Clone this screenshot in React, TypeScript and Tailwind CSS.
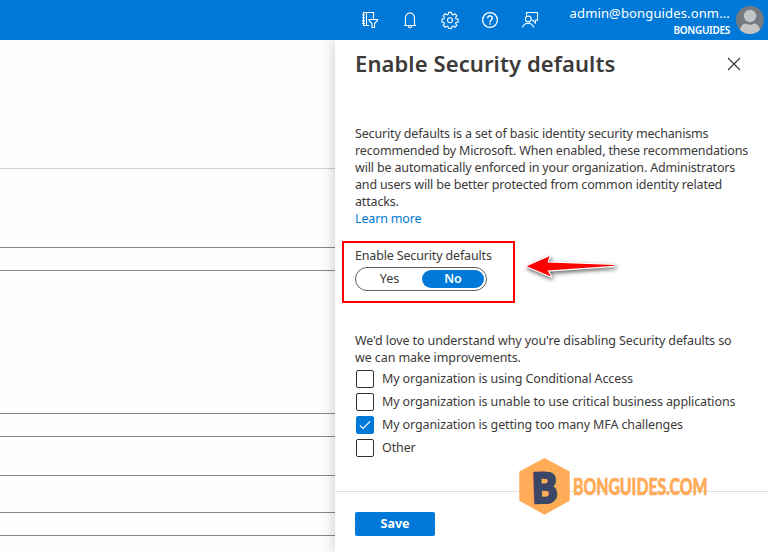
import React from 'react';

const rows = [
  { id: 'tabs', className: 'h-[129px] border-b border-[#d2d0ce]' },
  { id: 'intro', className: 'h-[79px] border-b border-[#8a8886]' },
  { id: 'field-name', className: 'h-[23px] border-b border-[#8a8886]' },
  { id: 'details', className: 'h-[143px] border-b border-[#8a8886]' },
  { id: 'field-contact', className: 'h-[23px] border-b border-[#8a8886]' },
  { id: 'field-global', className: 'h-[39px] border-b border-[#8a8886]' },
  { id: 'field-privacy', className: 'h-[37px] border-b border-[#8a8886]' },
  { id: 'field-url', className: 'h-[23px] border-b border-[#8a8886]' }
];

const description = [
  'Security defaults is a set of basic identity security mechanisms',
  'recommended by Microsoft. When enabled, these recommendations',
  'will be automatically enforced in your organization. Administrators',
  'and users will be better protected from common identity related',
  'attacks.'
];

const reasons = [
  { label: 'My organization is using Conditional Access', checked: false },
  { label: 'My organization is unable to use critical business applications', checked: false },
  { label: 'My organization is getting too many MFA challenges', checked: true },
  { label: 'Other', checked: false }
];

const iconProps = {
  width: 18,
  height: 18,
  viewBox: '0 0 18 18',
  fill: 'none',
  stroke: 'white',
  strokeWidth: 1.1
};

const FilterIcon = () => (
  <svg {...iconProps}>
    <path d="M8 14.5H2.5v-13h10v6M5.5 1.5v13M1 4h3M1 6.8h3M1 9.6h3M1 12.4h3" />
    <path d="M8 8.5h8.5v1l-3 3v4H11v-4l-3-3z" />
  </svg>
);

const BellIcon = () => (
  <svg {...iconProps}>
    <path d="M3 14.5h12M4.5 14.5V6.8a4.5 4.9 0 0 1 9 0v7.7M7.2 14.8a1.8 1.9 0 0 0 3.6 0" />
  </svg>
);

const GearIcon = () => (
  <svg {...iconProps}>
    <path d="M7.5 1.4h3l.4 2.1 1.2.5 1.8-1.2 1.9 1.9-1.2 1.8.5 1.2 2 .4v2.9l-2 .4-.5 1.2 1.2 1.8-1.9 1.9-1.8-1.2-1.2.5-.4 2h-3l-.4-2-1.2-.5-1.8 1.2-1.9-1.9 1.2-1.8-.5-1.2-2-.4V8.1l2-.4.5-1.2-1.2-1.8 1.9-1.9 1.8 1.2 1.2-.5z" />
    <circle cx="9" cy="9.3" r="2.5" />
  </svg>
);

const HelpIcon = () => (
  <svg {...iconProps} strokeWidth="1.3">
    <circle cx="9" cy="9" r="7.4" />
    <path d="M6.7 7.2a2.3 2.3 0 1 1 3.7 1.8C9.4 9.7 9 10 9 11.2" strokeWidth="1.5" />
    <path d="M9 12.2v1.6" strokeWidth="1.6" />
  </svg>
);

const FeedbackIcon = () => (
  <svg {...iconProps}>
    <path d="M5.5 4.5v-3h11v7.8h-2v2.6l-2.6-2.6h-.8" />
    <circle cx="7.3" cy="8" r="2.9" />
    <path d="M1.5 16.5a5.8 5.8 0 0 1 11.2 0" />
  </svg>
);

const TopBar = () => (
  <header className="flex h-10 shrink-0 items-center justify-end bg-[#0078d7] text-white">
    <div className="flex items-center gap-[22px]">
      <FilterIcon />
      <BellIcon />
      <GearIcon />
      <HelpIcon />
      <FeedbackIcon />
    </div>
    <div className="ml-[22px] flex w-[169px] flex-col items-end pt-[3px] whitespace-nowrap">
      <span className="text-[13px] leading-[17px] tracking-[0.14px]">admin@bonguides.onm...</span>
      <span className="text-[10px] leading-[16px] font-semibold tracking-[-0.3px]">BONGUIDES</span>
    </div>
    <svg className="mr-1 ml-[6px]" width="28" height="28" viewBox="0 0 28 28">
      <clipPath id="avatar"><circle cx="14" cy="14" r="14" /></clipPath>
      <g clipPath="url(#avatar)">
        <rect width="28" height="28" fill="#737a82" />
        <circle cx="14" cy="10" r="6.2" fill="#c3c5c7" />
        <path d="M3.5 28c0-7 3-10.5 6-10.5 2.5 1.5 6.5 1.5 9 0 3 0 6 3.5 6 10.5z" fill="#c3c5c7" />
      </g>
    </svg>
  </header>
);

const SettingsPage = () => (
  <main className="w-[335px] shrink-0">
    {rows.map((row) => (
      <div key={row.id} className={row.className} />
    ))}
  </main>
);

const Toggle = () => (
  <div className="flex h-6 w-[132px] items-center rounded-full border border-[#605e5c] px-[2px] text-center leading-[18px]">
    <span className="w-16 pr-[1px]">Yes</span>
    <span className="h-[18px] w-[62px] rounded-full bg-[#0078d7] font-semibold text-white">No</span>
  </div>
);

const Checkbox: React.FC<{ label: string; checked: boolean }> = ({ label, checked }) => (
  <label className="flex h-[23px] items-start gap-2 pl-[1px] leading-[20px] tracking-[-0.12px] whitespace-nowrap">
    <span className={`mt-[1px] flex h-[18px] w-[18px] items-center justify-center rounded-[2px] border ${checked ? 'border-[#0078d7] bg-[#0078d7]' : 'border-[#323130] bg-white'}`}>
      {checked && (
        <svg width="12" height="10" viewBox="0 0 12 10" fill="none" stroke="white" strokeWidth="1.1">
          <path d="M.8 5.3 4.2 8.5 11.3 1.2" />
        </svg>
      )}
    </span>
    <span>{label}</span>
  </label>
);

const Watermark = () => (
  <svg className="absolute top-[415px] left-[180px] overflow-visible" width="200" height="64" viewBox="515 455 200 64">
    <path d="M544.5 458 569.7 471.5V500.7L544.5 514.7 519.3 500.7V471.5Z" fill="#ffab57" />
    <text
      x="531"
      y="503"
      transform="rotate(-2 544 487)"
      fontFamily="Open Sans"
      fontSize="43"
      fontWeight="700"
      textLength="27"
      lengthAdjust="spacingAndGlyphs"
      fill="#3c4666"
      stroke="#3c4666"
      strokeWidth="2"
      strokeLinejoin="round"
    >
      B
    </text>
    <text
      x="573"
      y="495"
      fontFamily="Lato"
      fontSize="22"
      fontWeight="900"
      textLength="134.5"
      lengthAdjust="spacingAndGlyphs"
      fill="#ffab57"
      stroke="#ffab57"
      strokeWidth="0.6"
    >
      BONGUIDES.COM
    </text>
  </svg>
);

const SecurityPanel = () => (
  <aside className="relative flex flex-1 flex-col bg-white pl-5 shadow-[0_0_14px_rgba(0,0,0,0.22)]">
    <div className="flex h-12 items-center justify-between pr-[27px]">
      <h1 className="pb-[1px] text-[22px] font-semibold tracking-[0.1px] whitespace-nowrap">Enable Security defaults</h1>
      <svg width="14" height="14" viewBox="0 0 14 14" stroke="#323130" strokeWidth="1.1">
        <path d="M1 1 13 13M13 1 1 13" />
      </svg>
    </div>

    <div className="mt-[37px] leading-[17px] tracking-[-0.16px] whitespace-nowrap">
      {description.map((line) => (
        <p key={line}>{line}</p>
      ))}
      <a href="#" className="text-[#0078d4]">Learn more</a>
    </div>

    <div className="mt-5 leading-[17px]">
      <p className="mb-[3px] tracking-[-0.16px]">Enable Security defaults</p>
      <Toggle />
    </div>

    <div className="mt-[41px] leading-[17px] tracking-[-0.1px] whitespace-nowrap">
      <p>We'd love to understand why you're disabling Security defaults so</p>
      <p>we can make improvements.</p>
    </div>
    <div className="mt-[3px]">
      {reasons.map((reason) => (
        <Checkbox key={reason.label} {...reason} />
      ))}
    </div>

    <div className="mt-auto -ml-5 flex h-[61px] items-start border-t border-[#dedede] pt-5 pl-5">
      <button className="h-6 w-20 rounded-[2px] bg-[#0078d7] font-bold text-white">Save</button>
    </div>

    {/* callout around the toggle */}
    <div className="absolute top-[201px] left-[7px] h-[62px] w-[173px] border-2 border-[#fe0000]" />
    <svg className="absolute top-[206px] left-[181px] drop-shadow-[1px_2px_2px_rgba(0,0,0,0.6)]" width="110" height="46" viewBox="516 246 110 46">
      <path
        d="M526.7 266.2 549.5 256.2 547.5 262.4 614.5 265 614.5 265.8 547.5 270.6 551 276.600Z"
        fill="#fe0000"
        stroke="white"
        strokeWidth="2.2"
        strokeLinejoin="round"
        paintOrder="stroke"
      />
    </svg>
    <Watermark />
  </aside>
);

const App = () => (
  <div className="flex h-[552px] w-[768px] flex-col overflow-hidden bg-[#fefefe] font-['Noto_Sans','Open_Sans',sans-serif] text-[12.5px] text-[#3b3a39]">
    <TopBar />
    <div className="flex min-h-0 flex-1 overflow-hidden">
      <SettingsPage />
      <SecurityPanel />
    </div>
  </div>
);

export default App;
